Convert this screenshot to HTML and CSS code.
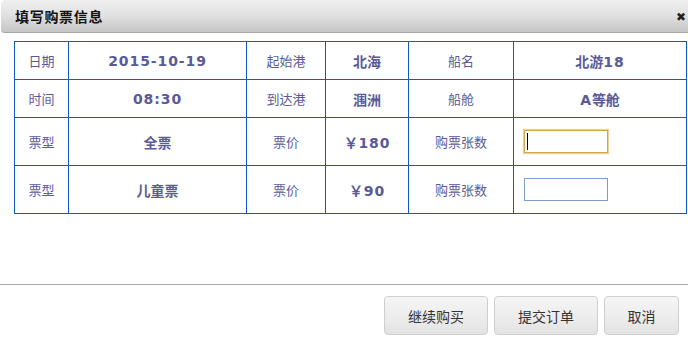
FILE: index.html
```html
<!DOCTYPE html>
<html lang="zh-CN">
<head>
<meta charset="utf-8">
<title>填写购票信息</title>
<link rel="stylesheet" href="styles.css">
</head>
<body>
<div class="dialog">
  <div class="header">
    <span class="title">填写购票信息</span>
    <span class="close">✖</span>
  </div>
  <div class="content">
    <table class="tickets">
      <colgroup>
        <col class="c1"><col class="c2"><col class="c3"><col class="c4"><col class="c5"><col class="c6">
      </colgroup>
      <tr class="short">
        <td>日期</td><td class="val num">2015-10-19</td>
        <td>起始港</td><td class="val">北海</td>
        <td>船名</td><td class="val">北游<span class="num">18</span></td>
      </tr>
      <tr class="short">
        <td>时间</td><td class="val num">08:30</td>
        <td>到达港</td><td class="val">涠洲</td>
        <td>船舱</td><td class="val"><span class="num">A</span>等舱</td>
      </tr>
      <tr class="tall">
        <td>票型</td><td class="val">全票</td>
        <td>票价</td><td class="val num">￥180</td>
        <td>购票张数</td>
        <td class="inp"><span class="field focused"><span class="caret"></span></span></td>
      </tr>
      <tr class="tall">
        <td>票型</td><td class="val">儿童票</td>
        <td>票价</td><td class="val num">￥90</td>
        <td>购票张数</td>
        <td class="inp"><span class="field"></span></td>
      </tr>
    </table>
  </div>
  <div class="footer">
    <button class="btn wide">继续购买</button>
    <button class="btn wide">提交订单</button>
    <button class="btn">取消</button>
  </div>
</div>
</body>
</html>
```

FILE: styles.css
```css
html, body {
  margin: 0;
  padding: 0;
  background: #fff;
}
body {
  font-family: "Noto Sans CJK SC", "Noto Sans", sans-serif;
}
.dialog {
  width: 688px;
  height: 339px;
  display: flex;
  flex-direction: column;
  overflow: hidden;
}
.header {
  height: 32px;
  margin-left: 1px;
  border-bottom: 1px solid #a7a7a7;
  border-radius: 4px 0 0 4px;
  background: linear-gradient(#efefef, #e2e2e2 45%, #c6c6c6);
  display: flex;
  align-items: center;
  justify-content: space-between;
  padding: 0 2px 0 14px;
  flex-shrink: 0;
}
.title {
  font-size: 14px;
  font-weight: bold;
  color: #111;
  letter-spacing: 0.7px;
}
.close {
  font-family: "DejaVu Sans", sans-serif;
  font-size: 12px;
  color: #222;
  margin-top: 1px;
}
.content {
  padding: 8px 0 0 14px;
  flex: 1;
}
.tickets {
  border-collapse: collapse;
  table-layout: fixed;
  width: 672px;
  color: #5a5a98;
  font-size: 13px;
}
.tickets td {
  border: 1px solid #0c5cc4;
  text-align: center;
  padding: 0;
  vertical-align: middle;
}
.c1 { width: 54px; }
.c2 { width: 178px; }
.c3 { width: 79px; }
.c4 { width: 83px; }
.c5 { width: 105px; }
.c6 { width: 173px; }
.short { height: 38px; }
.tall { height: 48px; }
.val {
  font-weight: bold;
  font-size: 14px;
}
.num {
  font-family: "DejaVu Sans", sans-serif;
  letter-spacing: 0.9px;
  font-size: 14px;
}
.tickets td.inp {
  text-align: left;
  padding-left: 10px;
}
.field {
  display: block;
  width: 82px;
  height: 21px;
  border: 1px solid #7d9ec4;
  position: relative;
}
.field.focused {
  border-color: #d4a548;
  box-shadow: 0 0 1px 1px #ecd29a;
}
.caret {
  position: absolute;
  left: 2px;
  top: 2px;
  width: 1px;
  height: 17px;
  background: #000;
}
.footer {
  height: 55px;
  border-top: 1px solid #a9a9a9;
  display: flex;
  justify-content: flex-end;
  align-items: flex-start;
  gap: 6px;
  padding: 11px 9px 0 0;
  box-sizing: border-box;
  flex-shrink: 0;
}
.btn {
  font-family: "Noto Sans CJK SC", sans-serif;
  font-size: 14px;
  color: #333;
  height: 39px;
  width: 75px;
  border: 1px solid #cfcfcf;
  border-radius: 4px;
  background: linear-gradient(#f5f5f5, #ededed 50%, #e3e3e3);
  padding: 0;
}
.btn.wide {
  width: 104px;
}
```
